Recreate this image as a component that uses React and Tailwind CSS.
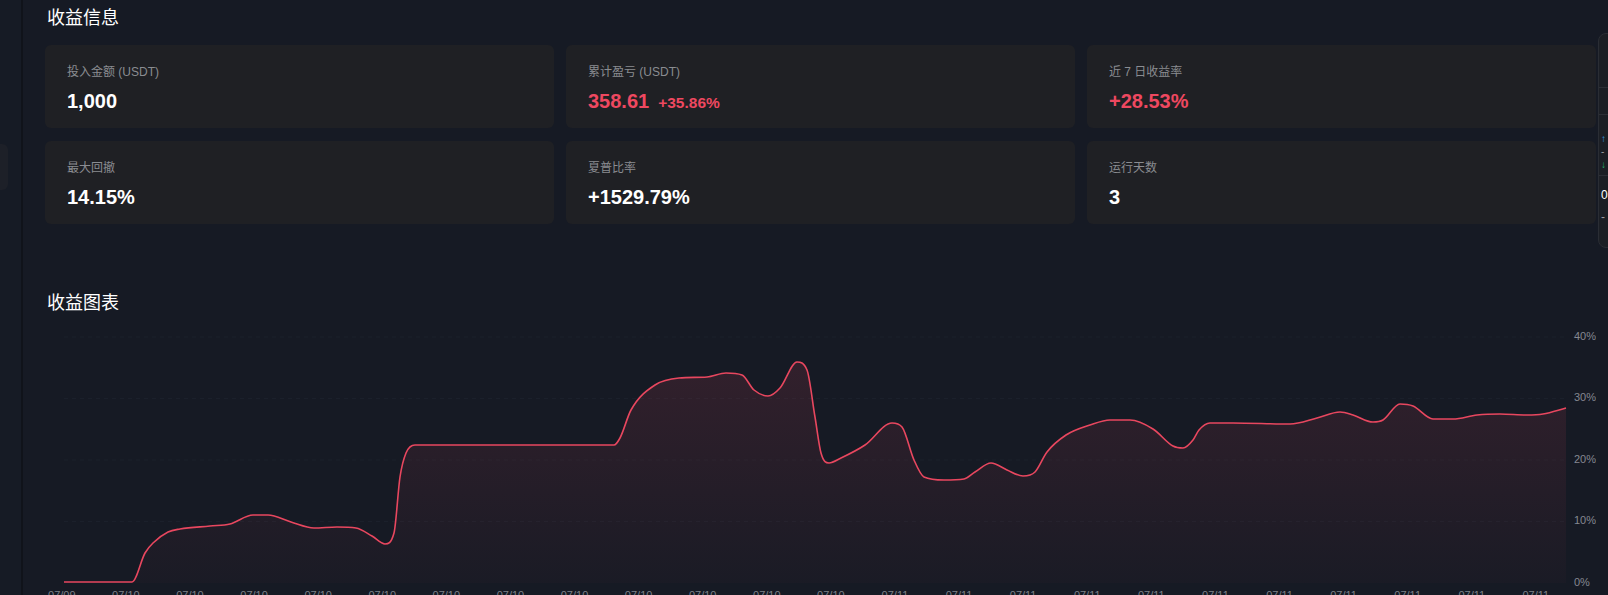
import React from 'react';

// 收益信息 + 收益图表 panel

const stats = [
    { label: '投入金额', unit: ' (USDT)', value: '1,000' },
    { label: '累计盈亏', unit: ' (USDT)', value: '358.61', sub: '+35.86%', red: true },
    { label: '近 7 日收益率', value: '+28.53%', red: true },
    { label: '最大回撤', value: '14.15%' },
    { label: '夏普比率', value: '+1529.79%' },
    { label: '运行天数', value: '3' },
];

// points in page coordinates (x, y)
const points = [
    [64, 582], [100, 582], [132, 582], [145, 553], [153, 543], [168, 532], [180, 529],
    [210, 526], [230, 524], [253, 515], [268, 515], [291, 522], [314, 528], [337, 527],
    [356, 528], [372, 536], [385, 544], [394, 533], [400, 477], [406, 453], [415, 445],
    [500, 445], [614, 445], [620, 438], [631, 410], [655, 385], [679, 378], [707, 377],
    [726, 373], [742, 375], [754, 390], [768, 396], [780, 388], [797, 362], [807, 370],
    [815, 417], [821, 453], [829, 463], [841, 458], [865, 445], [892, 423], [902, 427],
    [914, 460], [924, 477], [944, 480], [964, 479], [975, 472], [991, 463], [1007, 470],
    [1023, 476], [1035, 472], [1047, 452], [1066, 435], [1090, 425], [1110, 420],
    [1130, 420], [1153, 429], [1173, 446], [1183, 448], [1193, 440], [1199, 430],
    [1210, 423], [1233, 423], [1290, 424], [1317, 418], [1340, 412], [1353, 415],
    [1373, 422], [1383, 420], [1400, 404], [1413, 406], [1433, 419], [1453, 419],
    [1477, 415], [1500, 414], [1527, 415], [1543, 414], [1566, 408],
];

// monotone cubic in x, so the curve doesn't overshoot
function smoothPath(pts) {
    const n = pts.length;
    const m = [];
    for (let i = 0; i < n - 1; i++) {
        m.push((pts[i + 1][1] - pts[i][1]) / (pts[i + 1][0] - pts[i][0]));
    }
    const t = [m[0]];
    for (let i = 1; i < n - 1; i++) {
        t.push(m[i - 1] * m[i] <= 0 ? 0 : (m[i - 1] + m[i]) / 2);
    }
    t.push(m[n - 2]);
    for (let i = 0; i < n - 1; i++) {
        if (m[i] === 0) {
            t[i] = 0;
            t[i + 1] = 0;
            continue;
        }
        const a = t[i] / m[i];
        const b = t[i + 1] / m[i];
        const s = a * a + b * b;
        if (s > 9) {
            const k = 3 / Math.sqrt(s);
            t[i] = k * a * m[i];
            t[i + 1] = k * b * m[i];
        }
    }
    let d = `M${pts[0][0]},${pts[0][1]}`;
    for (let i = 0; i < n - 1; i++) {
        const [x0, y0] = pts[i];
        const [x1, y1] = pts[i + 1];
        const dx = (x1 - x0) / 3;
        d += ` C${(x0 + dx).toFixed(1)},${(y0 + t[i] * dx).toFixed(1)} ${(x1 - dx).toFixed(1)},${(y1 - t[i + 1] * dx).toFixed(1)} ${x1},${y1}`;
    }
    return d;
}

const yTicks = [
    { label: '40%', y: 337 },
    { label: '30%', y: 398.5 },
    { label: '20%', y: 460 },
    { label: '10%', y: 521.5 },
    { label: '0%', y: 583 },
];

const xLabels = Array.from({ length: 24 }, (_, i) => (i === 0 ? '07/09' : i < 13 ? '07/10' : '07/11'));

function StatCard({ item }) {
    return (
        <div className="h-[83px] rounded-md bg-[#1f2024] pl-[22px] pt-[19px]">
            <p className="text-[12px] leading-[16px] text-[#8a8c91]">
                {item.label}
                {item.unit && <span>{item.unit}</span>}
            </p>
            <div className="mt-[9px] flex items-baseline">
                <span className={`text-[20px] leading-[24px] font-bold ${item.red ? 'text-[#ee4860]' : 'text-white'}`}>
                    {item.value}
                </span>
                {item.sub && (
                    <span className="ml-[9px] text-[15.5px] font-bold text-[#ee4860]">{item.sub}</span>
                )}
            </div>
        </div>
    );
}

function ProfitChart() {
    const line = smoothPath(points);
    const area = `${line} L1566,583 L64,583 Z`;
    return (
        <svg width="1551" height="281" viewBox="45 314 1551 281" className="block">
            <defs>
                <linearGradient id="fillGrad" gradientUnits="userSpaceOnUse" x1="0" y1="350" x2="0" y2="583">
                    <stop offset="0" stopColor="#e8475f" stopOpacity="0.14" />
                    <stop offset="1" stopColor="#e8475f" stopOpacity="0.02" />
                </linearGradient>
            </defs>

            {/* grid */}
            {yTicks.slice(0, 4).map((t) => (
                <line key={t.label} x1="64" x2="1566" y1={t.y} y2={t.y} stroke="#1b202b" strokeDasharray="4 4" />
            ))}

            <path d={area} fill="url(#fillGrad)" />
            <path d={line} fill="none" stroke="#e8475f" strokeWidth="1.6" />

            {/* y axis */}
            {yTicks.map((t) => (
                <text key={t.label} x="1574" y={t.y} dominantBaseline="middle" fontSize="11" fill="#858891">
                    {t.label}
                </text>
            ))}

            {/* x axis */}
            {xLabels.map((l, i) => (
                <text key={i} x={61.8 + i * 64.09} y="599" textAnchor="middle" fontSize="11" fill="#7d8088">
                    {l}
                </text>
            ))}
        </svg>
    );
}

export default function App() {
    return (
        <div
            className="relative flex h-[595px] w-[1608px] overflow-hidden bg-[#161a24]"
            style={{ fontFamily: '"Liberation Sans", "Noto Sans CJK SC", sans-serif' }}
        >
            {/* Left sidebar edge */}
            <aside className="w-[21px] shrink-0 bg-[#161b25]">
                <div className="mt-[144px] h-[46px] w-[8px] rounded-r-md bg-[#1d2028]" />
            </aside>
            <div className="w-[2px] shrink-0 bg-[#10131a]" />

            {/* Main */}
            <main className="flex-1 pl-[22px] pr-[12px]">
                <h2
                    className="pl-[2px] pt-[3px] text-[18px] leading-[26px] text-white"
                    style={{ fontFamily: '"Noto Sans CJK SC", sans-serif' }}
                >
                    收益信息
                </h2>
                <div className="mt-[16px] grid grid-cols-3 gap-x-[12px] gap-y-[13px]">
                    {stats.map((s) => (
                        <StatCard key={s.label} item={s} />
                    ))}
                </div>

                <h2
                    className="mt-[64px] pl-[2px] text-[18px] leading-[26px] text-white"
                    style={{ fontFamily: '"Noto Sans CJK SC", sans-serif' }}
                >
                    收益图表
                </h2>
                <ProfitChart />
            </main>

            {/* Right floating panel, mostly off screen */}
            <div className="absolute left-[1598px] top-[33px] h-[215px] w-[200px] rounded-lg border border-[#2a2d34] bg-[#1c1f25]">
                <div className="mt-[53px] h-px bg-[#2c2f36]" />
                <div className="mt-[26px] h-px bg-[#2c2f36]" />
                <div className="mt-[18px] pl-[2px] text-[10px] leading-[12px] text-[#3aa0e8]">↑</div>
                <div className="pl-[2px] text-[10px] leading-[14px] text-[#9a9ca2]">-</div>
                <div className="pl-[2px] text-[10px] leading-[12px] text-[#20b26c]">↓</div>
                <div className="mt-[4px] h-px bg-[#2c2f36]" />
                <div className="mt-[12px] pl-[2px] text-[12px] leading-[14px] text-white">0</div>
                <div className="mt-[8px] pl-[2px] text-[12px] leading-[14px] text-[#9a9ca2]">-</div>
            </div>
        </div>
    );
}
